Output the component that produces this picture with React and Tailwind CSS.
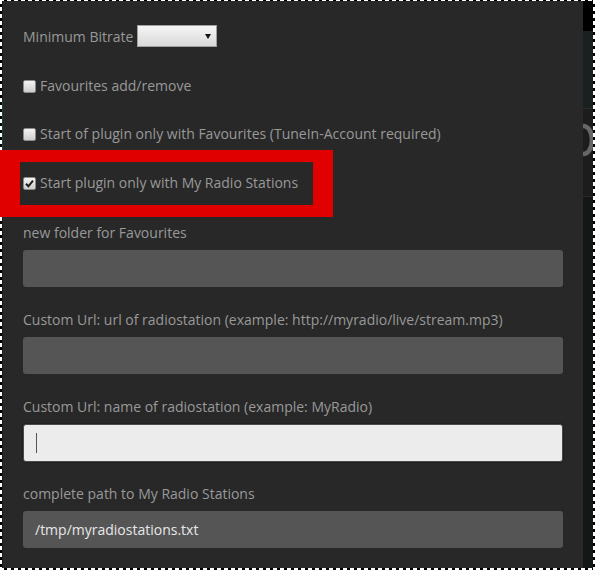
import React from 'react';

const labelClass = 'h-5 leading-5 text-[14px] text-[#999]';

function Checkbox({ checked }) {
  return (
    <span className="w-[13px] h-[13px] shrink-0 rounded-[2px] border border-[#8c8c8c] bg-gradient-to-b from-[#f4f4f4] to-[#cdcdcd] flex items-center justify-center">
      {checked && (
        <svg width="11" height="11" viewBox="0 0 11 11">
          <path d="M2 5.8 L4.4 8.3 L9 2.6" fill="none" stroke="#1e1e1e" strokeWidth="2" />
        </svg>
      )}
    </span>
  );
}

function CheckRow({ checked, label, className = '' }) {
  return (
    <div className={`h-5 flex items-center gap-1 ${className}`}>
      <Checkbox checked={checked} />
      <span className="leading-5 text-[14px] text-[#999] whitespace-nowrap">{label}</span>
    </div>
  );
}

function Field({ label, value, focused, className = '' }) {
  return (
    <div className={className}>
      <div className={labelClass}>{label}</div>
      {focused ? (
        <div className="mt-[7px] h-[38px] rounded-[3px] bg-[#ececec] border border-[#4a4a4a] shadow-[0_0_2px_rgba(0,0,0,0.6)] flex items-center pl-3">
          <span className="w-px h-5 bg-[#555]" />
        </div>
      ) : (
        <div className="mt-[7px] h-[37px] rounded-[3px] bg-[#555] flex items-center pl-3 text-[14px] text-[#e8e8e8]">
          {value}
        </div>
      )}
    </div>
  );
}

export default function App() {
  return (
    <div className="relative w-[595px] h-[570px] bg-black overflow-hidden font-['Open_Sans',sans-serif] flex pt-px pb-[2px] px-[2px]">
      {/* left sliver of the page behind */}
      <div className="w-px flex flex-col bg-[#1c1c1c]">
        <div className="h-[99px]" />
        <div className="h-[50px] bg-[#0e4a42]" />
        <div className="h-[50px]" />
        <div className="h-[10px] bg-[#0e4a42]" />
      </div>

      {/* settings panel */}
      <div className="w-[580px] bg-[#282828] px-5 pt-[24px]">
        <div className="h-[22px] flex items-center gap-1">
          <span className="text-[14px] text-[#999] whitespace-nowrap">Minimum Bitrate</span>
          <div className="w-[80px] h-[22px] border border-[#a0a0a0] bg-gradient-to-b from-[#f6f6f6] to-[#d9d9d9] flex items-center justify-end pr-[5px]">
            <svg width="6" height="5" viewBox="0 0 6 5">
              <polygon points="0,0 6,0 3,5" fill="#111" />
            </svg>
          </div>
        </div>

        <CheckRow className="mt-[29px]" label="Favourites add/remove" />
        <CheckRow className="mt-[28px]" label="Start of plugin only with Favourites (TuneIn-Account required)" />
        <CheckRow className="mt-[29px]" checked label="Start plugin only with My Radio Stations" />

        <Field className="mt-[30px]" label="new folder for Favourites" />
        <Field className="mt-[23px]" label="Custom Url: url of radiostation (example: http://myradio/live/stream.mp3)" />
        <Field className="mt-[23px]" label="Custom Url: name of radiostation (example: MyRadio)" focused />
        <Field className="mt-[22px]" label="complete path to My Radio Stations" value="/tmp/myradiostations.txt" />
      </div>

      {/* right sliver of the page behind */}
      <div className="w-[10px] flex flex-col">
        <div className="h-[30px] bg-black" />
        <div className="h-[77px] bg-[#1a1f1f]" />
        <div className="h-px bg-[#2c2c2c]" />
        <div className="h-[87px] bg-[#1c1c1c] pt-[14px]">
          <svg width="10" height="34" viewBox="0 0 10 34">
            <path d="M0 3 C 12 3 12 31 0 31" fill="none" stroke="#666" strokeWidth="4.5" />
          </svg>
        </div>
        <div className="h-px bg-[#2a2a2a]" />
        <div className="flex-1 bg-[#131817]" />
      </div>

      {/* selection marquee */}
      <div className="absolute left-0 top-0 w-full h-px bg-[repeating-linear-gradient(90deg,#fff_0_4px,#000_4px_7px)]" />
      <div className="absolute left-0 bottom-0 w-full h-[2px] bg-[repeating-linear-gradient(90deg,#fff_0_4px,#000_4px_7px)]" />
      <div className="absolute left-0 top-0 h-full w-[2px] bg-[repeating-linear-gradient(180deg,#fff_0_4px,#000_4px_7px)]" />
      <div className="absolute right-0 top-0 h-full w-[2px] bg-[repeating-linear-gradient(180deg,#fff_0_4px,#000_4px_7px)]" />

      {/* red highlight annotation */}
      <div className="absolute left-0 top-[150px] w-[333px] h-[67px] border-x-[20px] border-y-[12px] border-[#e10000]" />
    </div>
  );
}
